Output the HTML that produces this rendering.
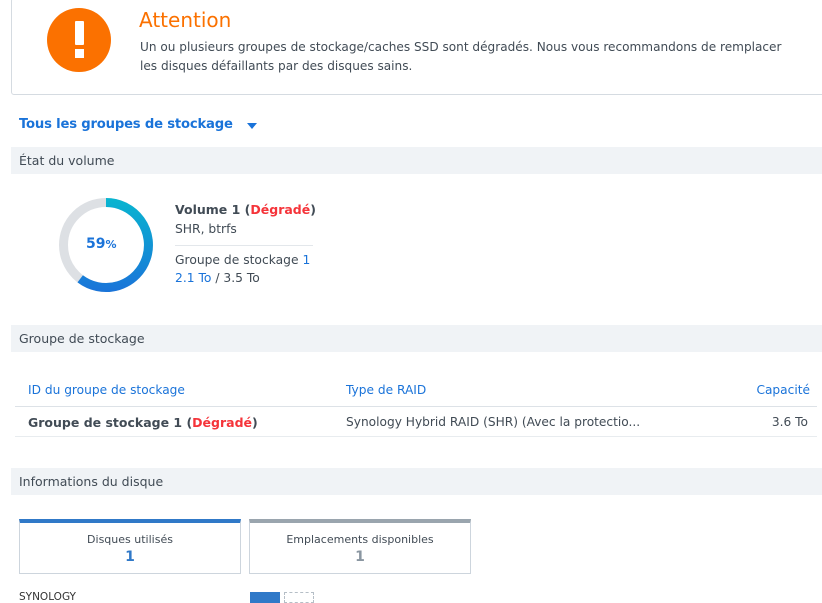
<!DOCTYPE html>
<html><head><meta charset="utf-8"><style>
body{margin:0;width:822px;height:603px;overflow:hidden;background:#fff;font-family:"DejaVu Sans","Liberation Sans",sans-serif;color:#414b55;position:relative}
.a{position:absolute;white-space:nowrap}
.bar{position:absolute;left:11px;width:811px;height:27px;background:#f0f3f6;font-size:12.5px;line-height:28px;text-indent:8px;color:#414b55}
.red{color:#f5343a;font-weight:bold}
.blue{color:#1a73d9}
</style></head><body>
<div class="a" style="left:11px;top:-2px;width:830px;height:95px;border:1px solid #d5dbe1;border-radius:3px"></div>
<div class="a" style="left:47px;top:8px;width:64px;height:64px;border-radius:50%;background:#fb7100"></div>
<div class="a" style="left:75px;top:21px;width:9px;height:24px;background:#fff;border-radius:1px"></div>
<div class="a" style="left:75px;top:49px;width:9px;height:9px;background:#fff"></div>
<div class="a" style="left:139px;top:8px;font-size:20px;color:#fb7100">Attention</div>
<div class="a" style="left:140px;top:38px;font-size:12.1px;line-height:19px;color:#414b55">Un ou plusieurs groupes de stockage/caches SSD sont dégradés. Nous vous recommandons de remplacer<br>les disques défaillants par des disques sains.</div>
<div class="a" style="left:19px;top:117px;font-size:13.2px;font-weight:bold;color:#1a73d9;letter-spacing:-0.2px">Tous les groupes de stockage</div>
<div class="a" style="left:247px;top:123px;width:0;height:0;border-left:5px solid transparent;border-right:5px solid transparent;border-top:6px solid #1a73d9"></div>
<div class="bar" style="top:147px">État du volume</div>
<svg class="a" style="left:58px;top:197px" width="96" height="96" viewBox="0 0 96 96">
<defs><linearGradient id="g" x1="0" y1="0" x2="0" y2="96" gradientUnits="userSpaceOnUse"><stop offset="0" stop-color="#08b6d0"/><stop offset="1" stop-color="#1a73d9"/></linearGradient></defs>
<circle cx="48" cy="48" r="42.5" fill="none" stroke="#dde0e4" stroke-width="9"/>
<path d="M48 5.5 A42.5 42.5 0 1 1 22.2 81.8" fill="none" stroke="url(#g)" stroke-width="9"/>
</svg>
<div class="a" style="left:86px;top:236px;font-size:14px;font-weight:bold;color:#1a73d9">59<span style="font-size:11px">%</span></div>
<div class="a" style="left:175px;top:202px;font-size:12.5px;font-weight:bold;color:#414b55">Volume 1 (<span class="red">Dégradé</span>)</div>
<div class="a" style="left:175px;top:222px;font-size:12.3px">SHR, btrfs</div>
<div class="a" style="left:175px;top:245px;width:138px;height:1px;background:#e3e7eb"></div>
<div class="a" style="left:175px;top:253px;font-size:12.3px">Groupe de stockage <span class="blue">1</span></div>
<div class="a" style="left:175px;top:271px;font-size:12.3px"><span class="blue">2.1 To</span> / 3.5 To</div>
<div class="bar" style="top:325px">Groupe de stockage</div>
<div class="a blue" style="left:28px;top:383px;font-size:12.2px">ID du groupe de stockage</div>
<div class="a blue" style="left:346px;top:383px;font-size:12.2px">Type de RAID</div>
<div class="a blue" style="right:12px;top:383px;font-size:12.2px">Capacité</div>
<div class="a" style="left:15px;top:406px;width:802px;height:1px;background:#dde2e7"></div>
<div class="a" style="left:28px;top:415px;font-size:12.5px;font-weight:bold">Groupe de stockage 1 (<span class="red">Dégradé</span>)</div>
<div class="a" style="left:346px;top:415px;font-size:12.2px">Synology Hybrid RAID (SHR) (Avec la protectio...</div>
<div class="a" style="right:14px;top:415px;font-size:12.2px">3.6 To</div>
<div class="a" style="left:15px;top:436px;width:802px;height:1px;background:#e8ecef"></div>
<div class="bar" style="top:468px">Informations du disque</div>
<div class="a" style="left:19px;top:519px;width:222px;border:1px solid #cdd5dd;border-top:4px solid #3079c8;box-sizing:border-box;height:55px;text-align:center;font-size:11px">
<div style="margin-top:10px">Disques utilisés</div><div style="font-size:14px;font-weight:bold;color:#3079c8;margin-top:3px">1</div></div>
<div class="a" style="left:249px;top:519px;width:222px;border:1px solid #cdd5dd;border-top:4px solid #9aa5ae;box-sizing:border-box;height:55px;text-align:center;font-size:11px">
<div style="margin-top:10px">Emplacements disponibles</div><div style="font-size:14px;font-weight:bold;color:#8a96a1;margin-top:3px">1</div></div>
<div class="a" style="left:19px;top:591px;font-size:10.5px;color:#333">SYNOLOGY</div>
<div class="a" style="left:250px;top:592px;width:30px;height:11px;background:#3079c8"></div>
<div class="a" style="left:284px;top:592px;width:30px;height:11px;border:1px dashed #b5bec6;box-sizing:border-box"></div>
</body></html>
